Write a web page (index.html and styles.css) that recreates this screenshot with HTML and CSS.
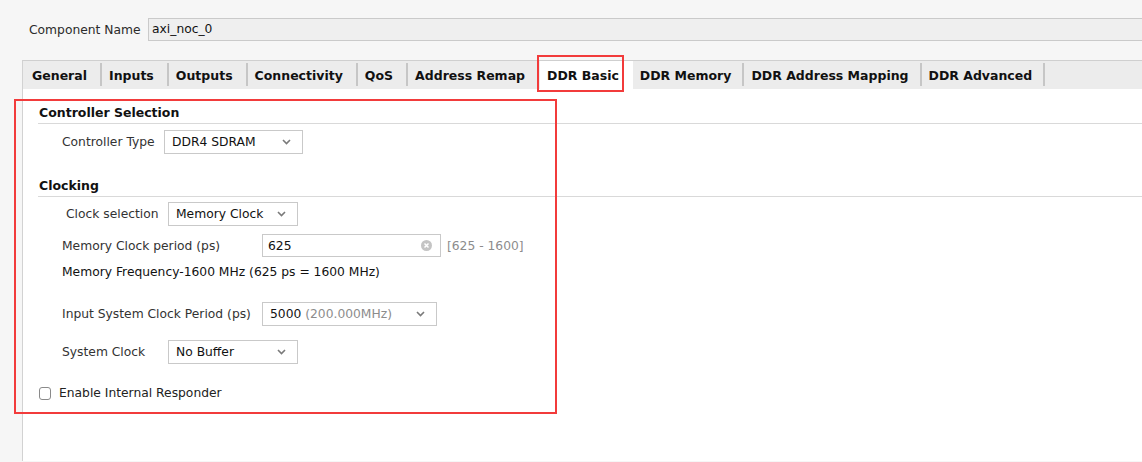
FILE: index.html
```html
<!DOCTYPE html>
<html lang="en">
<head>
    <meta charset="UTF-8">
    <title>axi_noc_0 - DDR Basic</title>
    <link rel="stylesheet" href="styles.css">
</head>
<body>

<div class="name-row">
    <span class="name-label">Component Name</span>
    <div class="name-input">axi_noc_0</div>
</div>

<div class="panel">
    <!-- Tabs -->
    <div class="tabs">
        <div class="tab">General</div>
        <div class="tab">Inputs</div>
        <div class="tab">Outputs</div>
        <div class="tab">Connectivity</div>
        <div class="tab">QoS</div>
        <div class="tab no-sep">Address Remap</div>
        <div class="tab active">DDR Basic
            <span class="mark mark-tab"></span>
        </div>
        <div class="tab">DDR Memory</div>
        <div class="tab">DDR Address Mapping</div>
        <div class="tab">DDR Advanced</div>
    </div>

    <!-- DDR Basic page -->
    <div class="page">
        <div class="group">
            <span class="mark mark-group"></span>

            <div class="section-title">Controller Selection</div>
            <div class="row row-controller">
                <span class="label">Controller Type</span>
                <div class="select w-controller">
                    <span>DDR4 SDRAM</span>
                    <svg class="chev" width="9" height="6" viewBox="0 0 9 6"><path d="M1 1l3.5 3.5L8 1" fill="none" stroke="#7a7a7a" stroke-width="1.6"/></svg>
                </div>
            </div>

            <div class="section-title section-clocking">Clocking</div>
            <div class="row row-clocksel">
                <span class="label">Clock selection</span>
                <div class="select w-small">
                    <span>Memory Clock</span>
                    <svg class="chev" width="9" height="6" viewBox="0 0 9 6"><path d="M1 1l3.5 3.5L8 1" fill="none" stroke="#7a7a7a" stroke-width="1.6"/></svg>
                </div>
            </div>

            <div class="row row-period">
                <span class="label wide">Memory Clock period (ps)</span>
                <div class="text-input">
                    <span>625</span>
                    <span class="clear">
                        <svg width="11" height="11" viewBox="0 0 11 11"><circle cx="5.5" cy="5.5" r="5.5" fill="#c4c4c4"/><path d="M3.5 3.5l4 4M7.5 3.5l-4 4" stroke="#fff" stroke-width="1.5"/></svg>
                    </span>
                </div>
                <span class="range">[625 - 1600]</span>
            </div>

            <div class="freq">Memory Frequency-1600 MHz (625 ps = 1600 MHz)</div>

            <div class="row row-sysperiod">
                <span class="label wide">Input System Clock Period (ps)</span>
                <div class="select w-period">
                    <span>5000 <span class="muted">(200.000MHz)</span></span>
                    <svg class="chev" width="9" height="6" viewBox="0 0 9 6"><path d="M1 1l3.5 3.5L8 1" fill="none" stroke="#7a7a7a" stroke-width="1.6"/></svg>
                </div>
            </div>

            <div class="row row-sysclock">
                <span class="label narrow">System Clock</span>
                <div class="select w-small">
                    <span>No Buffer</span>
                    <svg class="chev" width="9" height="6" viewBox="0 0 9 6"><path d="M1 1l3.5 3.5L8 1" fill="none" stroke="#7a7a7a" stroke-width="1.6"/></svg>
                </div>
            </div>

            <label class="check-row">
                <span class="checkbox"></span>
                <span>Enable Internal Responder</span>
            </label>
        </div>
    </div>
</div>

</body>
</html>
```

FILE: styles.css
```css
body {
    margin: 0;
    padding: 0;
    background-color: #f6f6f6;
    font-family: "DejaVu Sans", Verdana, sans-serif;
    font-size: 12.3px;
    color: #2b2b2b;
    overflow: hidden;
}

/* Component name */
.name-row {
    display: flex;
    align-items: center;
    height: 23px;
    padding: 18px 0 0 29px;
}
.name-label {
    width: 119px;
}
.name-input {
    flex: 1;
    height: 21px;
    line-height: 21px;
    padding-left: 3px;
    background-color: #efefef;
    border: 1px solid #cacaca;
    border-right: none;
    color: #111;
}

/* Tab panel */
.panel {
    margin: 19px 0 0 22px;
    border-left: 1px solid #d2d2d2;
    border-top: 1px solid #cfcfcf;
    height: 400px;
    background: #fff;
}
.tabs {
    display: flex;
    height: 28px;
    background-color: #ececec;
    padding-left: 2px;
}
.tab {
    position: relative;
    display: flex;
    align-items: center;
    padding: 0 15px 0 7px;
    font-weight: bold;
    font-size: 12.5px;
    color: #111;
}
.tab::after {
    content: "";
    position: absolute;
    right: 0;
    top: 2px;
    bottom: 3px;
    width: 2px;
    background-color: #c6c6c6;
}
.tab.no-sep::after,
.tab.active::after {
    display: none;
}
.tab.active {
    background: #fff;
    padding: 0 14px 0 7px;
    margin-left: -1px;
}
.tab.no-sep {
    padding-right: 16px;
}
.tab.active ~ .tab {
    padding-right: 13px;
}

/* red annotation boxes */
.mark {
    position: absolute;
    border: 2px solid #f23b3b;
    pointer-events: none;
}
.mark-tab {
    left: -3px;
    top: -6px;
    width: 83px;
    height: 33px;
}
.mark-group {
    left: -24px;
    top: -6px;
    width: 539px;
    height: 311px;
}

/* page */
.page {
    padding: 16px 0 0 15px;
}
.group {
    position: relative;
}
.section-title {
    font-weight: bold;
    font-size: 12.5px;
    color: #111;
    line-height: 16px;
    padding-left: 1px;
    padding-bottom: 2px;
    border-bottom: 1px solid #d9d9d9;
}
.section-clocking {
    margin-top: 24px;
}
.row {
    display: flex;
    align-items: center;
}
.label {
    color: #333;
}
.row-controller {
    margin-top: 6px;
    padding-left: 24px;
}
.row-controller .label {
    width: 102px;
}
.row-clocksel {
    margin-top: 5px;
    padding-left: 28px;
}
.row-clocksel .label {
    width: 102px;
}
.row-period {
    margin-top: 8px;
    padding-left: 24px;
}
.row-sysperiod {
    margin-top: 22px;
    padding-left: 24px;
}
.row-sysclock {
    margin-top: 14px;
    padding-left: 24px;
}
.label.wide {
    width: 200px;
}
.label.narrow {
    width: 106px;
}

.select {
    display: flex;
    align-items: center;
    justify-content: space-between;
    height: 22px;
    padding: 0 11px 0 7px;
    border: 1px solid #c9c9c9;
    background: #fff;
    color: #111;
    box-sizing: content-box;
}
.w-controller { width: 119px; }
.w-small { width: 110px; }
.w-period { width: 155px; }
.muted {
    color: #8c8c8c;
}

.text-input {
    display: flex;
    align-items: center;
    justify-content: space-between;
    width: 164px;
    height: 21px;
    padding: 0 8px 0 5px;
    border: 1px solid #c9c9c9;
    color: #111;
}
.clear {
    display: flex;
}
.range {
    margin-left: 6px;
    color: #8c8c8c;
}

.freq {
    margin-top: 7px;
    padding-left: 24px;
    line-height: 16px;
    color: #111;
}

.check-row {
    display: flex;
    align-items: center;
    gap: 8px;
    margin-top: 22px;
    padding-left: 1px;
    color: #222;
}
.checkbox {
    width: 10px;
    height: 11px;
    border: 1px solid #8a8a8a;
    border-radius: 3px;
    background: #fff;
}
```
